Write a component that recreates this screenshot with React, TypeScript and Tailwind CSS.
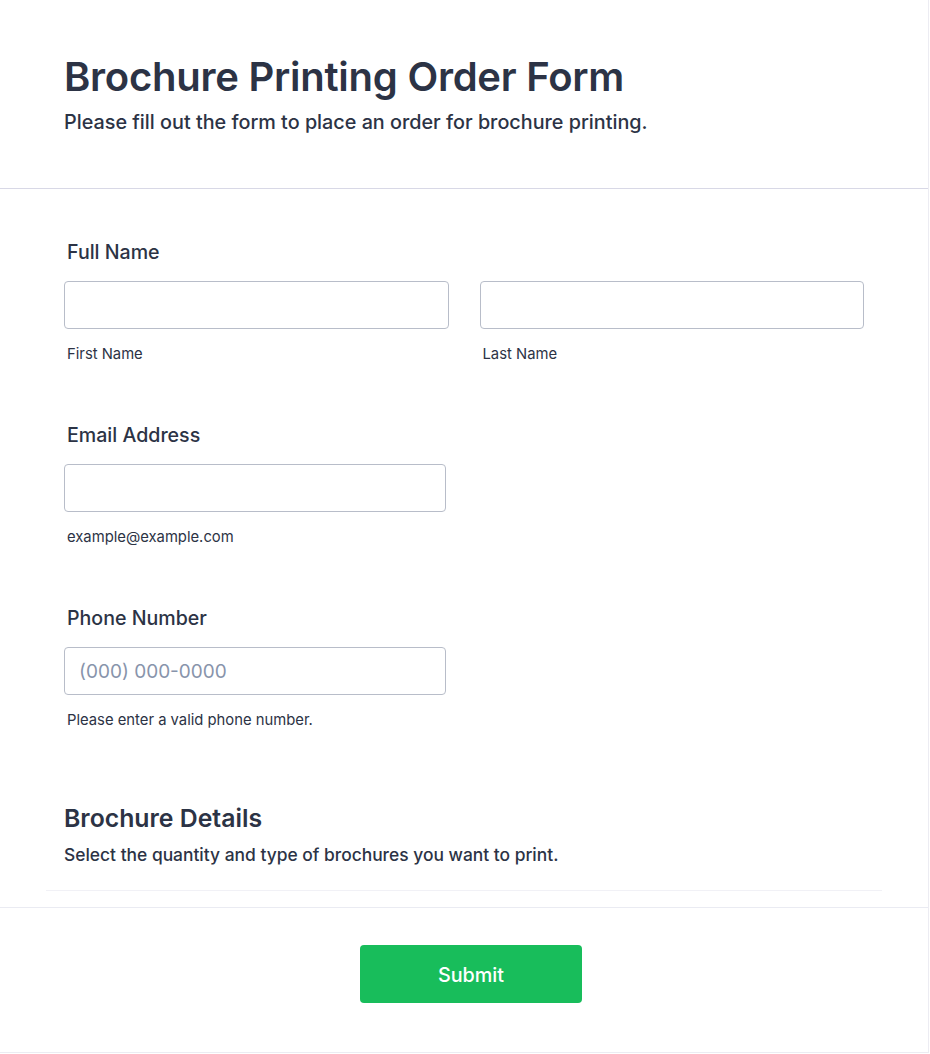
import React from 'react';

const font = { fontFamily: 'Inter, "Noto Sans", sans-serif' };

interface FieldProps {
  label: string;
  sublabel: string;
  placeholder?: string;
}

const SingleField: React.FC<FieldProps> = ({ label, sublabel, placeholder }) => (
  <div className="flex flex-col px-[18px]">
    <label className="text-[19.6px] leading-[28px] font-medium text-[#2c3345] pl-[3px]">{label}</label>
    <input
      type="text"
      placeholder={placeholder}
      className="mt-[15px] w-[382px] h-[48px] rounded-[4px] border border-[#b8bdc9] bg-white px-[14px] text-[19px] text-[#2c3345] placeholder:text-[#8894ab] outline-none"
    />
    <span className="mt-[15px] text-[14.8px] leading-[20px] text-[#2c3345] pl-[3px]">{sublabel}</span>
  </div>
);

export default function App() {
  return (
    <div className="min-h-screen bg-white" style={font}>
      <div className="w-[929px] h-[1053px] bg-white border-r border-b border-[#ececf2] flex flex-col">
        {/* Header */}
        <div className="px-[64px] pt-[53px] pb-[52px] border-b border-[#d8d8e6]">
          <h1 className="text-[40px] leading-[48px] font-semibold text-[#2c3345] tracking-[-0.25px]">
            Brochure Printing Order Form
          </h1>
          <p className="mt-[7px] text-[19.8px] leading-[28px] font-medium text-[#2c3345]">
            Please fill out the form to place an order for brochure printing.
          </p>
        </div>

        {/* Fields */}
        <div className="px-[46px] pt-[49px] flex flex-col">
          <div className="flex flex-col px-[18px]">
            <label className="text-[19.6px] leading-[28px] font-medium text-[#2c3345] pl-[3px]">Full Name</label>
            <div className="mt-[15px] grid grid-cols-2 gap-[31px]">
              <div className="flex flex-col">
                <input
                  type="text"
                  className="h-[48px] rounded-[4px] border border-[#b8bdc9] bg-white px-[14px] outline-none"
                />
                <span className="mt-[15px] text-[14.8px] leading-[20px] text-[#2c3345] pl-[3px]">First Name</span>
              </div>
              <div className="flex flex-col">
                <input
                  type="text"
                  className="h-[48px] rounded-[4px] border border-[#b8bdc9] bg-white px-[14px] outline-none"
                />
                <span className="mt-[15px] text-[14.8px] leading-[20px] text-[#2c3345] pl-[3px]">Last Name</span>
              </div>
            </div>
          </div>

          <div className="mt-[57px]">
            <SingleField label="Email Address" sublabel="example@example.com" />
          </div>
          <div className="mt-[57px]">
            <SingleField label="Phone Number" sublabel="Please enter a valid phone number." placeholder="(000) 000-0000" />
          </div>

          {/* Section heading */}
          <div className="mt-[72px] px-[18px] pb-[23px] border-b border-[#f1f1f6]">
            <h2 className="text-[24.8px] leading-[32px] font-semibold text-[#2c3345]">Brochure Details</h2>
            <p className="mt-[9px] text-[17.4px] leading-[24px] font-medium text-[#2c3345]">
              Select the quantity and type of brochures you want to print.
            </p>
          </div>
        </div>

        {/* Footer */}
        <div className="mt-[16px] border-t border-[#eaebf2] flex justify-center pt-[37px] pl-[14px]">
          <button className="w-[222px] h-[58px] rounded-[4px] bg-[#18bd5b] text-white text-[19.8px] font-medium pt-[3px]">
            Submit
          </button>
        </div>
      </div>
    </div>
  );
}
